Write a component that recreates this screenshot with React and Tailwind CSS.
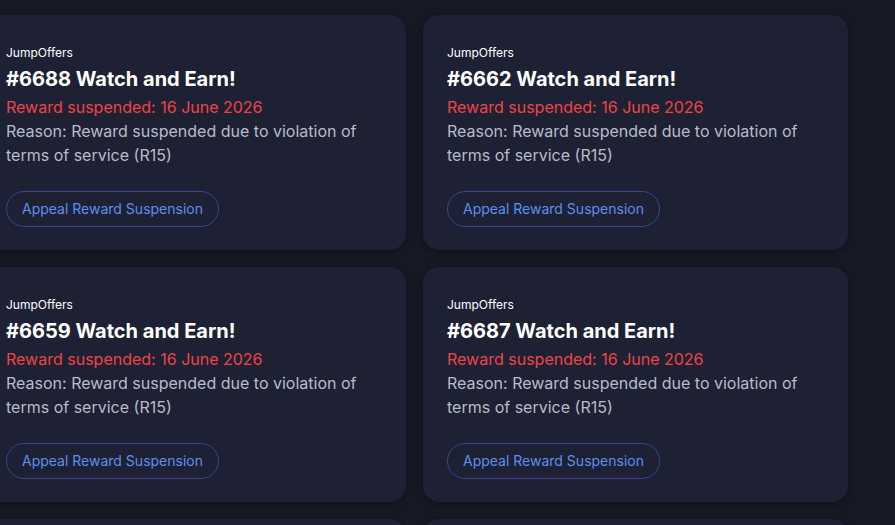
import React from 'react'

const rewards = [
  { id: 6688 },
  { id: 6662 },
  { id: 6659 },
  { id: 6687 },
]

const RewardCard = ({ id }) => (
  <div className="flex flex-col rounded-2xl bg-[#1e2134] px-6 pt-[30px] pb-[23px] shadow-[0_2px_10px_rgba(0,0,0,0.35)]">
    <p className="text-xs leading-4 text-white">JumpOffers</p>
    <h2 className="mt-1 text-xl leading-7 font-bold text-white">
      #{id} Watch and Earn!
    </h2>
    <p className="mt-[2px] text-base leading-6 text-[#ef4444]">
      Reward suspended: 16 June 2026
    </p>
    <p className="text-base leading-6 text-[#b9bcc6]">
      Reason: Reward suspended due to violation of terms of service (R15)
    </p>
    <div className="mt-6">
      <button className="h-9 rounded-full border border-[#3a4490] px-[15px] text-sm text-[#5b8ff0]">
        Appeal Reward Suspension
      </button>
    </div>
  </div>
)

// next row peeks in at the bottom edge
const PeekCard = () => (
  <div className="h-[235px] rounded-2xl bg-[#1e2134] shadow-[0_2px_10px_rgba(0,0,0,0.35)]" />
)

export default function App() {
  return (
    <div
      className="h-[525px] w-[895px] overflow-hidden bg-[#171925]"
      style={{ fontFamily: 'Inter, "Noto Sans", sans-serif' }}
    >
      <div className="ml-[-18px] mt-[15px] grid w-[867px] grid-cols-[424px_425px] gap-[17px]">
        {rewards.map((r) => (
          <RewardCard key={r.id} id={r.id} />
        ))}
        <PeekCard />
        <PeekCard />
      </div>
    </div>
  )
}
